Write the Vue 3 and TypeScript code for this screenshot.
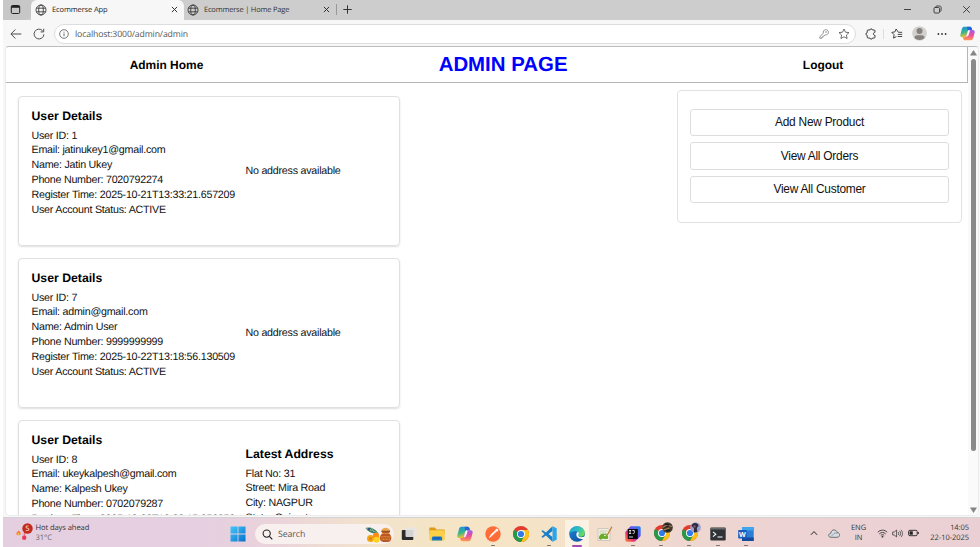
<script setup lang="ts">
interface User {
  id: number
  email: string
  name: string
  phone: string
  registered: string
  status: string
  address?: { flat: string; street: string; city: string; state: string }
}

const users: User[] = [
  { id: 1, email: 'jatinukey1@gmail.com', name: 'Jatin Ukey', phone: '7020792274', registered: '2025-10-21T13:33:21.657209', status: 'ACTIVE' },
  { id: 7, email: 'admin@gmail.com', name: 'Admin User', phone: '9999999999', registered: '2025-10-22T13:18:56.130509', status: 'ACTIVE' },
  {
    id: 8, email: 'ukeykalpesh@gmail.com', name: 'Kalpesh Ukey', phone: '0702079287', registered: '2025-10-22T13:28:15.358358', status: 'ACTIVE',
    address: { flat: '31', street: 'Mira Road', city: 'NAGPUR', state: 'Gujarat' },
  },
]

const actions: string[] = ['Add New Product', 'View All Orders', 'View All Customer']

const tabs = [
  { title: 'Ecommerse App', active: true },
  { title: 'Ecommerse | Home Page', active: false },
]

const apps: { name: string; state: '' | 'open' | 'focused' }[] = [
  { name: 'taskview', state: '' },
  { name: 'files', state: '' },
  { name: 'copilot', state: '' },
  { name: 'postman', state: 'open' },
  { name: 'chrome', state: '' },
  { name: 'vscode', state: 'open' },
  { name: 'edge', state: 'focused' },
  { name: 'notepad', state: '' },
  { name: 'intellij', state: 'open' },
  { name: 'chrome-a', state: 'open' },
  { name: 'chrome-b', state: 'open' },
  { name: 'terminal', state: 'open' },
  { name: 'word', state: 'open' },
]
</script>

<template>
  <div class="screen">
    <svg class="defs" width="0" height="0">
      <defs>
        <linearGradient id="copA" x1="0" y1="0" x2="0.3" y2="1"><stop offset="0" stop-color="#1a8fe8" /><stop offset=".55" stop-color="#35b58c" /><stop offset="1" stop-color="#f4c62a" /></linearGradient>
        <linearGradient id="copB" x1="0.5" y1="0" x2="0.4" y2="1"><stop offset="0" stop-color="#a05be8" /><stop offset=".5" stop-color="#ec4f9a" /><stop offset="1" stop-color="#ff9a4d" /></linearGradient>
        <linearGradient id="edgeA" x1="0" y1="0" x2="1" y2="0.6"><stop offset="0" stop-color="#219fe0" /><stop offset=".6" stop-color="#2fc2b8" /><stop offset="1" stop-color="#6bdc55" /></linearGradient>
        <linearGradient id="edgeB" x1="0" y1="0" x2="1" y2="1"><stop offset="0" stop-color="#1b88d8" /><stop offset="1" stop-color="#114a98" /></linearGradient>
        <linearGradient id="winA" x1="0" y1="0" x2="1" y2="1"><stop offset="0" stop-color="#41c8f8" /><stop offset="1" stop-color="#0870d0" /></linearGradient>
        <linearGradient id="ijA" x1="0" y1="1" x2="1" y2="0"><stop offset="0" stop-color="#fb8b3e" /><stop offset=".3" stop-color="#ee3069" /><stop offset=".55" stop-color="#7a48e8" /><stop offset="1" stop-color="#1689f2" /></linearGradient>
        <symbol id="copilot" viewBox="0 0 16 16">
          <path d="M4.500.8h6c1.200 0 1.700.7 2 1.700l.5 1.700H10c-1 0-1.500.6-1.800 1.600L6.800 10.600c-.3 1-.9 1.500-1.800 1.500H2.500C.8 12.100 0 10.800.4 9.200l1.500-5.700C2.300 1.800 3 .8 4.500.8z" fill="url(#copA)" />
          <path d="M7.500.8h3c1.200 0 1.700.7 2 1.700l.5 1.700H10c-1 0-1.500.6-1.700 1.200z" fill="#2865d8" />
          <path d="M11.500 15.200h-6c-1.200 0-1.700-.7-2-1.700L3 12.100h2c1 0 1.500-.6 1.800-1.500l1.400-4.800c.3-1 .9-1.600 1.800-1.600h3.500c1.700 0 2.500 1.300 2.100 2.900l-1.500 5.500c-.4 1.700-1.100 2.600-2.600 2.600z" fill="url(#copB)" />
          <path d="M9 4.900 7.300 10.900h-.2c.9 0 1.300-.3 1.600-1.200l1.500-4.800z" fill="#fff" stroke="#fff" stroke-width=".8" />
        </symbol>
        <symbol id="chrome" viewBox="0 0 16 16">
          <circle cx="8" cy="8" r="8" fill="#e33b2e" />
          <path d="M1.070 4A8 8 0 0 0 8 16l3.460-6H8z" fill="#269a48" />
          <path d="M8 16A8 8 0 0 0 14.930 4H8l3.460 6z" fill="#fbc116" />
          <path d="M1.070 4l3.470 6L8 12V8z" fill="#269a48" />
          <circle cx="8" cy="8" r="4" fill="#fff" />
          <circle cx="8" cy="8" r="3.100" fill="#317be8" />
        </symbol>
        <symbol id="globe" viewBox="0 0 12 12">
          <g fill="none" stroke="#333" stroke-width=".85"><circle cx="6" cy="6" r="5" /><ellipse cx="6" cy="6" rx="2.300" ry="5" /><path d="M1.400 4.200h9.200M1.400 7.800h9.200" /></g>
        </symbol>
      </defs>
    </svg>

    <div class="window">
      <div class="tabbar">
        <div class="tabmenu">
          <svg width="11" height="11" viewBox="0 0 11 11"><rect x="1.300" y="1.500" width="8.400" height="8" rx="1.300" fill="none" stroke="#222" stroke-width="1" /><path d="M1.200 1.800h8.600v2H1.200z" fill="#222" /></svg>
        </div>
        <div v-for="tab in tabs" :key="tab.title" class="tab" :class="{ active: tab.active }">
          <svg width="12" height="12"><use href="#globe" /></svg>
          <span class="tab-title">{{ tab.title }}</span>
          <svg width="7" height="7" viewBox="0 0 7 7"><path d="M.9.9l5.200 5.200M6.100.9.9 6.100" stroke="#333" stroke-width="1" /></svg>
        </div>
        <span class="tab-divider"></span>
        <svg class="plus" width="9" height="9" viewBox="0 0 9 9"><path d="M4.500.3v8.400M.3 4.500h8.400" stroke="#333" /></svg>
        <div class="controls">
          <svg width="9" height="9" viewBox="0 0 9 9"><path d="M1 4.500h7" stroke="#333" stroke-width=".9" /></svg>
          <svg width="9" height="9" viewBox="0 0 9 9"><g fill="none" stroke="#333" stroke-width=".9"><rect x="1" y="2.500" width="5.500" height="5.500" rx="1" /><path d="M2.800 2.300V1.800c0-.5.400-.8.800-.8h3c.9 0 1.500.6 1.500 1.500v3c0 .5-.4.9-.9.900" /></g></svg>
          <svg width="9" height="9" viewBox="0 0 9 9"><path d="M1.200 1.200l6.600 6.600M7.800 1.200 1.200 7.800" stroke="#333" stroke-width=".9" /></svg>
        </div>
      </div>

      <div class="toolbar">
        <svg class="back" width="12" height="12" viewBox="0 0 12 12"><path d="M11.300 6H1M5.400 1.500.9 6l4.500 4.500" fill="none" stroke="#444" stroke-width=".95" /></svg>
        <svg class="reload" width="12" height="12" viewBox="0 0 12 12"><path d="M10.900 6.400A4.900 4.900 0 1 1 9.600 2.700M10.700.8v3.100H7.600" fill="none" stroke="#444" stroke-width=".95" /></svg>
        <div class="address">
          <svg width="10" height="10" viewBox="0 0 10 10"><circle cx="5" cy="5" r="4.300" fill="none" stroke="#555" stroke-width=".8" /><path d="M5 4.400v2.800M5 2.700v.9" stroke="#555" stroke-width=".9" /></svg>
          <span class="url">localhost:3000/admin/admin</span>
          <svg class="key" width="10" height="10" viewBox="0 0 10 10"><g fill="none" stroke="#777" stroke-width=".8"><path d="M4.400 4.200a2.600 2.600 0 1 1 1.900 1.600L4.900 7.100H3.800v1.200H2.700v1H.8V7.700z" /><circle cx="7" cy="3" r=".4" /></g></svg>
          <svg width="12" height="12" viewBox="0 0 12 12"><path d="M6 1l1.500 3.200 3.500.4-2.600 2.400.7 3.500L6 8.800l-3.100 1.700.7-3.500L1 4.600l3.500-.4z" fill="none" stroke="#555" stroke-width=".85" stroke-linejoin="round" /></svg>
        </div>
        <div class="tools">
          <svg width="12" height="12" viewBox="0 0 12 12"><path d="M3 2h1.900c0-1.500 2.500-1.500 2.500 0h1.800c.5 0 .8.300.8.800v1.500c-1.900-.2-2.300 3.100 0 3.100v1.700c0 .5-.3.900-.8.900H7.500c0 1.500-2.600 1.500-2.600 0H3c-.5 0-.8-.4-.8-.9V7.300C.5 7.200.5 4.800 2.200 4.700V2.800C2.200 2.300 2.500 2 3 2z" fill="none" stroke="#333" stroke-width=".95" /></svg>
          <span class="sep"></span>
          <svg width="12" height="12" viewBox="0 0 12 12"><path d="M7.200 4 5.100 1 3.900 3.900.8 4.400l2.300 2.300-.6 3.400 2.900-1.500M7.200 4.300h4M6.700 6.400h4.500M6.700 8.500h4.500" fill="none" stroke="#333" stroke-width=".9" /></svg>
          <svg class="avatar" width="15" height="15" viewBox="0 0 15 15"><circle cx="7.500" cy="7.500" r="7.300" fill="#d3d0cd" /><circle cx="7.500" cy="5.100" r="3" fill="#85817e" /><path d="M2.500 12c0-1.600 1-2.700 2.600-2.700h4.800c1.600 0 2.600 1.100 2.600 2.700a7 7 0 0 1-10 0z" fill="#85817e" /></svg>
          <svg class="more" width="10" height="4" viewBox="0 0 10 4"><g fill="#333"><circle cx="1.400" cy="2" r=".9" /><circle cx="5" cy="2" r=".9" /><circle cx="8.600" cy="2" r=".9" /></g></svg>
          <svg width="15" height="15"><use href="#copilot" /></svg>
        </div>
      </div>

      <div class="viewport">
        <main class="page">
          <header class="header">
            <a class="link">Admin Home</a>
            <h1>ADMIN PAGE</h1>
            <a class="link">Logout</a>
          </header>
          <div class="content">
            <section class="users">
              <article v-for="user in users" :key="user.id" class="card">
                <div class="details">
                  <h3>User Details</h3>
                  <p>User ID: {{ user.id }}</p>
                  <p>Email: {{ user.email }}</p>
                  <p>Name: {{ user.name }}</p>
                  <p>Phone Number: {{ user.phone }}</p>
                  <p>Register Time: {{ user.registered }}</p>
                  <p v-if="!user.address">User Account Status: {{ user.status }}</p>
                </div>
                <div v-if="user.address" class="location">
                  <h3>Latest Address</h3>
                  <p>Flat No: {{ user.address.flat }}</p>
                  <p>Street: {{ user.address.street }}</p>
                  <p>City: {{ user.address.city }}</p>
                  <p>State: {{ user.address.state }}</p>
                </div>
                <p v-else class="empty">No address available</p>
              </article>
            </section>
            <aside class="actions">
              <button v-for="action in actions" :key="action" type="button">{{ action }}</button>
            </aside>
          </div>
        </main>
        <div class="scrollbar">
          <svg width="7" height="6" viewBox="0 0 7 6"><path d="M3.500.4 6.600 5.200H.4z" fill="#858585" stroke="#858585" stroke-width=".5" stroke-linejoin="round" /></svg>
          <span class="thumb"></span>
          <svg width="7" height="6" viewBox="0 0 7 6"><path d="M3.500 5.600 6.600.8H.4z" fill="#858585" stroke="#858585" stroke-width=".5" stroke-linejoin="round" /></svg>
        </div>
      </div>
    </div>

    <footer class="taskbar">
      <div class="weather">
        <svg width="17" height="19" viewBox="0 0 17 19">
          <path d="M2.300 7.500c2 1 2.700 2.200 2.300 3.700C4.300 12.800.4 12.800.3 10.800c0-1.500 1.600-1.600 2-3.300z" fill="#f47b31" /><circle cx="2.400" cy="11" r="1" fill="#ffc94a" />
          <rect x="6.800" y="5.500" width="2.800" height="9" rx="1.400" fill="#f5f1f5" stroke="#d9a6b4" stroke-width=".5" /><circle cx="8.200" cy="14.700" r="2.200" fill="#e83d58" /><path d="M8.200 9.500v5" stroke="#e83d58" />
          <circle cx="11.500" cy="5.500" r="5.200" fill="#c22b1c" />
          <text x="11.500" y="8.200" font-size="7.500" text-anchor="middle" fill="#fff" font-family="Open Sans, sans-serif">5</text>
        </svg>
        <div class="weather-text"><span>Hot days ahead</span><span class="temp">31°C</span></div>
      </div>

      <svg class="start" width="16" height="16" viewBox="0 0 16 16"><path d="M.5.500h7.100v7.100H.5zM8.400.5h7.100v7.100H8.400zM.5 8.400h7.100v7.100H.5zM8.400 8.400h7.100v7.100H8.400z" fill="url(#winA)" /></svg>

      <div class="search">
        <svg width="11" height="11" viewBox="0 0 11 11"><circle cx="4.700" cy="4.600" r="3.600" fill="none" stroke="#222" stroke-width="1.100" /><path d="M7.400 7.300l2.900 3" stroke="#222" stroke-width="1.200" /></svg>
        <span>Search</span>
        <svg width="27" height="17" viewBox="0 0 27 17">
          <path d="M.5 2c3-1.500 9-.5 13 5.500-5 .8-10-1-13-5.500z" fill="#377a62" /><path d="M1 2l12 5M3 1l3 4M6 1.500 9 6" stroke="#a8c7a1" stroke-width=".6" /><circle cx="4" cy="3" r="1.100" fill="#244b80" />
          <circle cx="5.500" cy="12.500" r="3.500" fill="#f4a515" /><circle cx="11" cy="10" r="3.200" fill="#ff8c14" /><circle cx="11.500" cy="13.700" r="3" fill="#ffd323" /><circle cx="5.500" cy="12.500" r="1.500" fill="#e18410" />
          <path d="M16.500 5.500h8.500l-1 2c4 3 2.500 8.500-1.500 8.500h-4c-4 0-5.500-5.500-1-8.500z" fill="#b95727" /><path d="M16 5.500c1-5 8-5 9.500 0z" fill="#eea64c" /><path d="M15.700 10.800h10.600M16.800 7.500H24M16.500 13.200h9" stroke="#f0ad3c" stroke-width=".9" stroke-dasharray="1 .5" /><path d="M16.500 5.300h8.500" stroke="#7c3b21" />
        </svg>
      </div>

      <div class="apps">
        <div v-for="app in apps" :key="app.name" class="app" :class="app.state">
          <svg v-if="app.name === 'taskview'" width="16" height="16" viewBox="0 0 16 16"><rect x=".8" y="4" width="11.500" height="10" rx="1" fill="#2c2c2c" /><rect x="4.500" y="1.500" width="11" height="9.500" rx="1" fill="#e6e3e3" opacity=".9" /></svg>
          <svg v-else-if="app.name === 'files'" width="16" height="16" viewBox="0 0 16 16"><path d="M.3 2.500c0-.7.300-1 1-1h4.500l1.700 2H15c.4 0 .7.300.7.700v4H.3z" fill="#dc9a18" /><rect x=".3" y="4.300" width="15.400" height="10.200" rx="1" fill="#fbcf48" /><path d="M2.900 14.500V12c0-1 .5-1.600 1.500-1.600h7.200c1 0 1.500.6 1.500 1.600v2.500z" fill="#1877c9" /><path d="M5 12h6" stroke="#1155a0" /></svg>
          <svg v-else-if="app.name === 'copilot'" width="16" height="16"><use href="#copilot" /></svg>
          <svg v-else-if="app.name === 'postman'" width="16" height="16" viewBox="0 0 16 16"><circle cx="8" cy="8" r="7.700" fill="#ff6c37" /><path d="M4 12.200 5.300 9l5-4.700 1.400 1.500-4.800 4.500-2.900 1.900z" fill="#fff" /><circle cx="11.800" cy="4.200" r="1.400" fill="#fff" /><path d="M5.500 9.500l1 1 4.500-4.300" fill="none" stroke="#ff6c37" stroke-width=".6" /></svg>
          <svg v-else-if="app.name === 'chrome'" width="16" height="16"><use href="#chrome" /></svg>
          <svg v-else-if="app.name === 'vscode'" width="16" height="16" viewBox="0 0 16 16"><path d="M11.500.3 4.900 6.500 1.800 4.200.3 5l3.200 3-3.200 3 1.500.8 3.100-2.300 6.600 6.200V11L7.600 8l3.900-3z" fill="#187ec7" /><path d="M11.500.3 15.700 2.300v11.400l-4.200 2z" fill="#27a6ed" /></svg>
          <svg v-else-if="app.name === 'edge'" width="16" height="16" viewBox="0 0 16 16"><circle cx="8" cy="8" r="7.800" fill="url(#edgeB)" /><path d="M.2 8C.5 3.200 3.900.2 8 .2c4.500 0 7.800 3 7.800 6.500 0 2.600-1.800 4-4 4-1.700 0-2.700-.7-2.600-1.400 1.200-1.500.3-4-2.500-4C3.500 5.200.8 6 .2 8z" fill="url(#edgeA)" /><path d="M9.200 9.300c-.2 1 1 1.900 3.100 1.900 1.300 0 2.100-.3 3.400-.9v2.700h-1.800c-3.300 0-6.500-1.400-6.500-4.300 0-1.500.6-2.500 1.600-2.900 1 .8 1.300 2.200.2 3.500z" fill="#fff" /></svg>
          <svg v-else-if="app.name === 'notepad'" width="16" height="16" viewBox="0 0 16 16"><path d="M1 2.500h10l2 2v10H1z" fill="#f2f1df" stroke="#aaa" stroke-width=".5" /><path d="M2.500 5h8M2.500 7h6" stroke="#b9bca6" stroke-width=".7" /><path d="M1.800 12.500c0-4 3-5.500 5.500-4.500l2-.8.500 1.700c2 1.200 1.700 4.200-.2 4.200l-4-.4-2.200 1z" fill="#6cab2a" /><circle cx="8" cy="9.500" r=".8" fill="#fff" /><path d="M14.900.8 10 9.500" stroke="#c27b33" stroke-width="1.300" /></svg>
          <svg v-else-if="app.name === 'intellij'" width="16" height="16" viewBox="0 0 16 16"><path d="M5.500.3H14c1 0 1.700.7 1.700 1.700v7.200c0 .5-.2.900-.5 1.200l-4.800 4.800c-.3.300-.7.500-1.200.5H2c-1 0-1.700-.7-1.700-1.700V6z" fill="url(#ijA)" /><path d="M2.800 3h10v10h-10z" fill="#08080b" /><path d="M4 4.500h2.200M5.100 4.500v3M4 7.500h2.200M7.300 4.500h2v2.200c0 .7-.8.900-1.600.8M4 11h4" fill="none" stroke="#fff" stroke-width=".8" /></svg>
          <svg v-else-if="app.name === 'chrome-a'" class="badged" width="20" height="20" viewBox="0 0 20 20"><use href="#chrome" x="1" y="3" width="16" height="16" /><circle cx="14.500" cy="5.500" r="5.300" fill="#44382d" /><path d="M9.500 5.500l4-2 5.500 1M10.500 8l6-2" stroke="#a28153" stroke-width="1.200" /><path d="M12 2l4 1M13 9l4-1" stroke="#161c22" stroke-width="1.500" /></svg>
          <svg v-else-if="app.name === 'chrome-b'" class="badged" width="20" height="20" viewBox="0 0 20 20"><use href="#chrome" x="1" y="3" width="16" height="16" /><circle cx="14.500" cy="5.500" r="5.300" fill="#9da1c9" /><path d="M10.500 4c.5-4 7-4 7 0L15.800 6l.5 4-3.500.5.300-4z" fill="#302b43" /><circle cx="13.500" cy="4.500" r="1.200" fill="#765c69" /></svg>
          <svg v-else-if="app.name === 'terminal'" width="16" height="16" viewBox="0 0 16 16"><rect x=".3" y="1.500" width="15.400" height="13" rx="1" fill="#303235" /><path d="M.5 2h15v1.500H.5z" fill="#666b70" /><path d="M3 5.800l2.800 2.400L3 10.600M7.500 11h5" fill="none" stroke="#fff" stroke-width="1.100" /></svg>
          <svg v-else width="16" height="16" viewBox="0 0 16 16"><rect x="4" y="1" width="11.700" height="14" rx=".8" fill="#2b7cd3" /><path d="M4 1h11.700v3.500H4z" fill="#41a5ee" /><path d="M4 11.500h11.700V15H4z" fill="#144a9c" /><rect x=".2" y="4" width="8.500" height="8.500" rx=".7" fill="#185abd" /><text x="4.450" y="10.700" font-size="7" font-weight="700" fill="#fff" text-anchor="middle" font-family="Open Sans, sans-serif">W</text></svg>
          <span class="mark"></span>
        </div>
      </div>

      <div class="tray">
        <svg width="8" height="6" viewBox="0 0 8 6"><path d="M.9 4.800 4 1.600l3.100 3.200" fill="none" stroke="#222" stroke-width="1" /></svg>
        <svg class="cloud" width="12" height="9" viewBox="0 0 12 9"><path d="M3 8.300C-.1 8.300.1 4.500 2.800 4.300 3.200-.1 8.500-.1 9 3.500c3.500.1 3.400 4.800.1 4.800z" fill="#d6dce1" stroke="#55595d" stroke-width=".8" /><path d="M3 7.500l3-3c1.300-1 2.900-.5 3 .4" fill="none" stroke="#919ca6" /></svg>
        <div class="lang"><span>ENG</span><span>IN</span></div>
        <svg class="wifi" width="11" height="9" viewBox="0 0 11 9"><g fill="none" stroke="#333" stroke-width=".9"><path d="M.8 3.200c2.700-2.700 6.700-2.700 9.400 0M2.300 4.900c1.900-1.900 4.500-1.900 6.400 0M3.800 6.400c1-1 2.400-1 3.400 0" /></g><circle cx="5.500" cy="7.700" r=".9" fill="#333" /></svg>
        <svg class="sound" width="11" height="9" viewBox="0 0 11 9"><g fill="none" stroke="#333" stroke-width=".75"><path d="M.7 3h1.600l2.300-2v7L2.300 6H.7zM6.100 3c.8.8.8 2.200 0 3M7.500 1.900c1.500 1.500 1.500 3.700 0 5.200M8.900.8c2.100 2.100 2.100 5.300 0 7.400" /></g></svg>
        <svg class="battery" width="11" height="8" viewBox="0 0 11 8"><rect x=".6" y="1.300" width="8.600" height="5.400" rx="1.300" fill="none" stroke="#222" stroke-width=".9" /><path d="M1.600 2.300h3.200v3.400H1.600z" fill="#222" /><path d="M10.300 3v2" stroke="#222" stroke-width="1" /></svg>
        <div class="clock"><span>14:05</span><span>22-10-2025</span></div>
      </div>
    </footer>
  </div>
</template>

<style>
body { margin: 0; background: #fff; overflow: hidden; }
</style>

<style scoped>
* { box-sizing: border-box; }
svg { display: block; flex: none; }
.screen { width: 980px; height: 547px; padding-left: 3px; display: flex; flex-direction: column; overflow: hidden; background: #fff; font-family: "Open Sans", "Noto Sans", sans-serif; text-rendering: geometricPrecision; }
.defs { width: 0; height: 0; }
.window { height: 518px; flex: none; display: flex; flex-direction: column; background: #f7f7f7; border-bottom: 1px solid #d4d1d4; }

.tabbar { height: 20px; flex: none; display: flex; align-items: stretch; background: #cdcdcd; }
.tabmenu { width: 28px; padding: 4px 0 0 7px; background: #c7c7c7; border-radius: 0 0 6px 0; }
.tab { width: 152px; display: flex; align-items: center; padding: 0 6px 1px 3px; gap: 5px; font-size: 7.500px; letter-spacing: -.12px; color: #333; }
.tab + .tab { letter-spacing: -.2px; }
.tab.active { width: 153px; padding-left: 4px; background: #f7f7f7; border-radius: 6px 6px 0 0; color: #222; }
.tab-title { flex: 1; white-space: nowrap; }
.tab-divider { width: 1px; height: 11px; margin: 4px 0 0; background: #999; }
.plus { margin: 5px 0 0 6px; }
.controls { margin-left: auto; padding: 5px 9px 0 0; display: flex; gap: 20.500px; }

.toolbar { height: 26px; flex: none; display: flex; align-items: center; padding: 1px 5px 0 7px; }
.reload { margin-left: 11px; }
.address { width: 802px; height: 20px; margin-left: 9px; padding: 0 5px 0 4px; display: flex; align-items: center; background: #fff; border: 1px solid #ddd; border-radius: 10px; }
.url { flex: 1; margin-left: 6px; font-size: 8.700px; letter-spacing: -.13px; color: #555; }
.key { margin-right: 9px; }
.tools { flex: 1; margin-left: 9px; display: flex; align-items: center; }
.sep { width: 1px; height: 10px; margin: 0 7px 0 6px; background: #ddd; }
.avatar { margin-left: 9px; }
.more { margin: 0 auto 0 10px; }

.viewport { flex: 1; min-height: 0; margin: 0 1px 1px 2px; display: flex; background: #fff; border-radius: 4px 4px 5px 5px; border: 1px solid #ececec; border-top-color: #bbb; overflow: hidden; }
.page { width: 963px; overflow: hidden; font-family: "Liberation Sans", Arial, sans-serif; font-size: 10.700px; letter-spacing: -.24px; color: #111; }
.header { height: 36px; padding: 0 6px; display: flex; align-items: center; justify-content: space-around; border: 1px solid #b5b5b5; border-width: 0 1px 1px 0; letter-spacing: 0; }
.header h1 { margin: 0; font-size: 20.420px; line-height: 24px; color: #00f; }
.link { font-size: 11.950px; font-weight: 700; color: #000; }
.content { display: flex; justify-content: space-between; align-items: flex-start; padding: 7px 6px 0 12px; }
.users { width: 382px; padding-top: 6px; display: flex; flex-direction: column; gap: 12px; }
.card { height: 150px; padding: 11px 12.500px; display: flex; align-items: center; gap: 10px; border: 1px solid #e0e0e0; border-radius: 4px; box-shadow: 0 1px 2px rgba(0, 0, 0, .13); white-space: nowrap; }
.details { align-self: flex-start; width: 204px; }
h3 { margin: 0 0 4.500px; font-size: 12.250px; line-height: 16px; letter-spacing: 0; color: #000; }
p { margin: 0; line-height: 14.900px; }
.location { height: 98px; }
.actions { width: 285px; height: 133px; padding: 18px 12px 0; display: flex; flex-direction: column; gap: 6px; border: 1px solid #e2e2e2; border-radius: 4px; }
.actions button { height: 27.400px; padding: 0 0 1px; font: 11.900px "Liberation Sans", Arial, sans-serif; letter-spacing: -.24px; color: #111; background: #fff; border: 1px solid #ddd; border-radius: 3px; }

.scrollbar { width: 10px; padding: 3px 1px 2px 2px; display: flex; flex-direction: column; align-items: center; background: #fafafa; }
.thumb { width: 5px; height: 392px; margin: 3px 0 auto; border-radius: 3px; background: #8a8a8a; }

.taskbar { height: 29px; flex: none; display: flex; align-items: center; color: #333; background: linear-gradient(90deg, #e4cfe1 0%, #e6cfe0 20%, #ead3da 28%, #f2e2cd 37%, #f5e5c5 45%, #f5e3c7 56%, #efd8d0 67%, #edd3d3 80%, #ead0d4 100%); }
.weather { width: 227px; padding-left: 13px; display: flex; align-items: center; gap: 2.500px; }
.weather-text { margin-top: 1px; display: flex; flex-direction: column; font-size: 7.600px; line-height: 10px; letter-spacing: -.1px; }
.temp { color: #666; }
.start { margin-top: 2px; }
.search { width: 139px; height: 20px; margin: 3px 0 0 9px; padding: 0 2px 0 7px; display: flex; align-items: center; border-radius: 10px; background: #f8f0ef; font-size: 8.800px; letter-spacing: -.1px; color: #555; }
.search span { flex: 1; margin-left: 5px; }
.apps { height: 27px; margin: 2px 0 0 1px; display: flex; }
.app { width: 28.050px; display: flex; flex-direction: column; align-items: center; justify-content: center; position: relative; }
.app.focused { background: linear-gradient(90deg, transparent 2px, #fbf2e4 2px, #fbf2e4 26px, transparent 26px); border-radius: 3px; }
.badged { margin: -3px 0 0 3px; }
.mark { display: none; position: absolute; bottom: 1px; width: 4px; height: 1px; background: #777; border-radius: 1px; }
.open .mark { display: block; }
.focused .mark { display: block; width: 10px; height: 2px; bottom: 0; background: #a448b5; }
.tray { margin-left: auto; padding: 1px 11px 0 0; display: flex; align-items: center; font-size: 7.500px; line-height: 10px; letter-spacing: -.05px; }
.cloud { margin-left: 10px; }
.lang { width: 17px; margin-left: 10px; display: flex; flex-direction: column; align-items: center; }
.wifi { margin-left: 10px; }
.sound { margin-left: 4px; }
.battery { margin-left: 5px; }
.clock { width: 50px; display: flex; flex-direction: column; align-items: flex-end; }
</style>
